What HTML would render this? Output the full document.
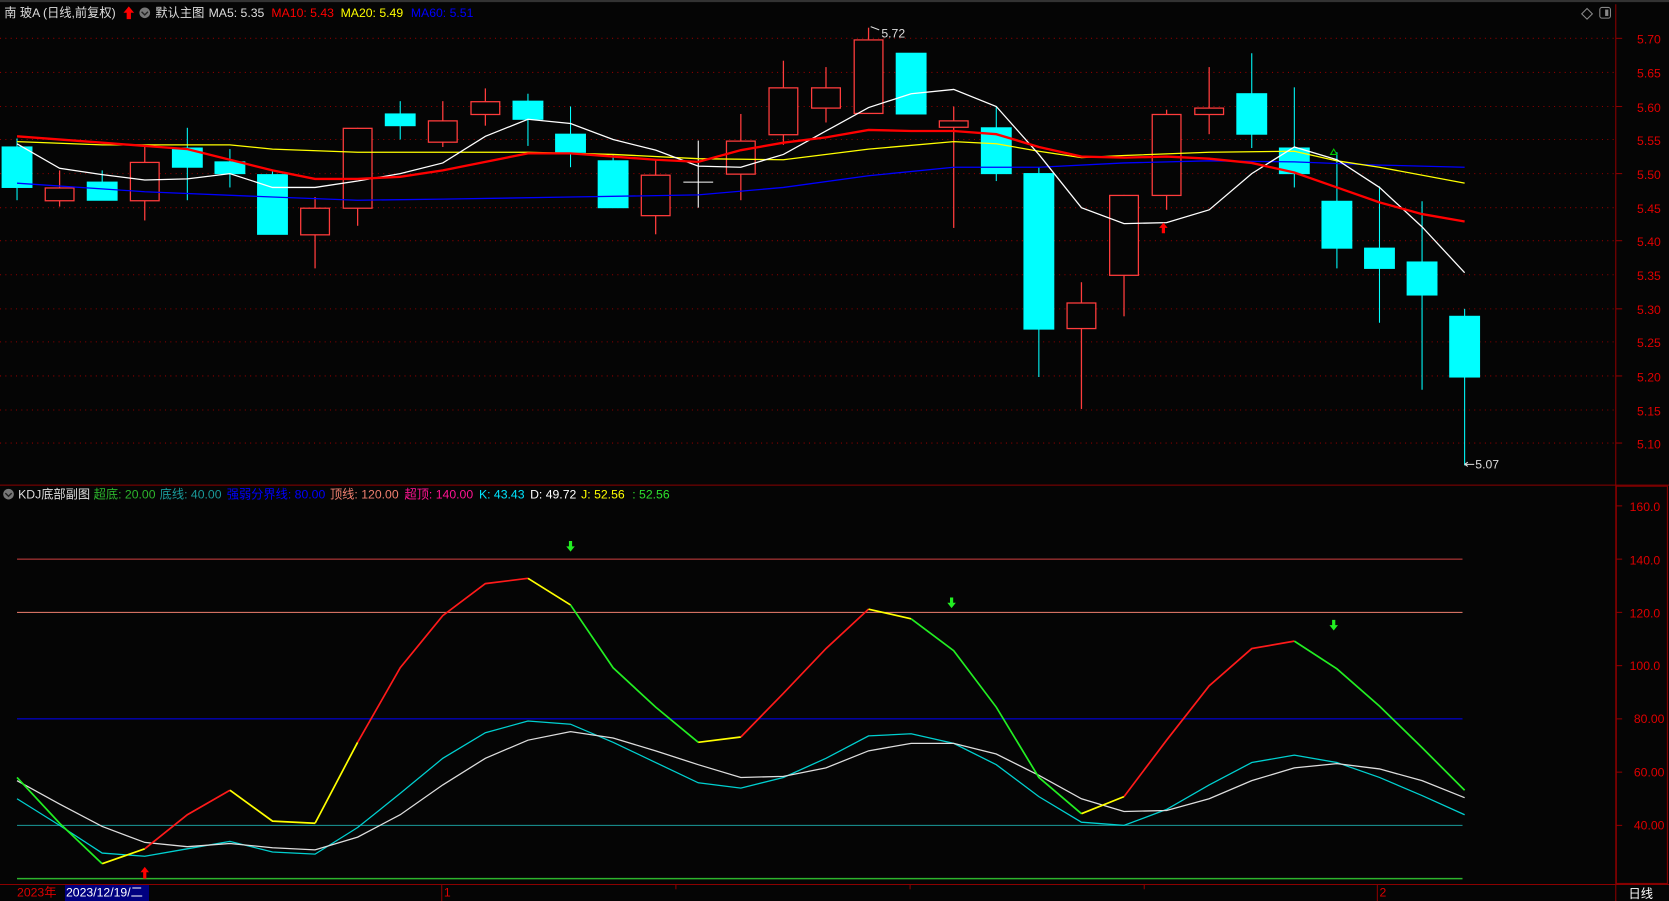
<!DOCTYPE html>
<html><head><meta charset="utf-8"><style>
html,body{margin:0;padding:0;background:#050505;overflow:hidden;width:1669px;height:901px}
svg{display:block}
text{font-family:"Liberation Sans","Noto Sans CJK SC",sans-serif;font-size:11.5px}
</style></head><body>
<svg width="1669" height="901" viewBox="0 0 1568 846" preserveAspectRatio="none">
<rect width="1568" height="846" fill="#050505"/>
<line x1="0" y1="1" x2="1568" y2="1" stroke="#333" stroke-width="2"/>
<!-- header -->
<text x="4" y="16" fill="#ddd">南 玻A (日线,前复权)</text>
<path d="M121 6 l5 6 h-3 v6 h-4 v-6 h-3z" fill="#f00"/>
<circle cx="136" cy="12" r="5" fill="#777"/><path d="M133 11 l3 3 l3 -3" stroke="#222" fill="none" stroke-width="1.3"/>
<text x="146" y="16" fill="#ddd">默认主图</text>
<text x="196" y="16" fill="#ddd">MA5: 5.35</text>
<text x="255" y="16" fill="#f00">MA10: 5.43</text>
<text x="320" y="16" fill="#ff0">MA20: 5.49</text>
<text x="386" y="16" fill="#0000ff">MA60: 5.51</text>
<path d="M1491 8 l5 5 l-5 5 l-5 -5z" fill="none" stroke="#888"/>
<rect x="1503" y="7" width="10" height="10" rx="2" fill="none" stroke="#888"/><rect x="1508" y="9" width="3" height="6" fill="#888"/>
<!-- price grid -->
<g stroke="#8b0000" stroke-dasharray="1,4" stroke-width="1">
<line x1="0" x2="1518" y1="36" y2="36"/><line x1="0" x2="1518" y1="68" y2="68"/><line x1="0" x2="1518" y1="100" y2="100"/><line x1="0" x2="1518" y1="131" y2="131"/><line x1="0" x2="1518" y1="163" y2="163"/><line x1="0" x2="1518" y1="195" y2="195"/><line x1="0" x2="1518" y1="226" y2="226"/><line x1="0" x2="1518" y1="258" y2="258"/><line x1="0" x2="1518" y1="290" y2="290"/><line x1="0" x2="1518" y1="321" y2="321"/><line x1="0" x2="1518" y1="353" y2="353"/><line x1="0" x2="1518" y1="385" y2="385"/><line x1="0" x2="1518" y1="416" y2="416"/>
</g>
<line x1="1518" y1="4" x2="1518" y2="846" stroke="#8b0000"/>
<g fill="#e00000" font-size="12">
<text x="1538" y="41">5.70</text><text x="1538" y="73">5.65</text><text x="1538" y="105">5.60</text><text x="1538" y="136">5.55</text><text x="1538" y="168">5.50</text><text x="1538" y="200">5.45</text><text x="1538" y="231">5.40</text><text x="1538" y="263">5.35</text><text x="1538" y="295">5.30</text><text x="1538" y="326">5.25</text><text x="1538" y="358">5.20</text><text x="1538" y="390">5.15</text><text x="1538" y="421">5.10</text>
</g>
<g stroke="#8b0000"><line x1="1518" x2="1524" y1="36" y2="36"/><line x1="1518" x2="1524" y1="100" y2="100"/><line x1="1518" x2="1524" y1="163" y2="163"/><line x1="1518" x2="1524" y1="226" y2="226"/><line x1="1518" x2="1524" y1="290" y2="290"/><line x1="1518" x2="1524" y1="353" y2="353"/><line x1="1518" x2="1524" y1="416" y2="416"/></g>
<!-- candles: cyan -->
<g stroke="#00ffff" fill="#00ffff">
<line x1="16" x2="16" y1="130" y2="188"/><rect x="2" y="138" width="28" height="38"/>
<line x1="96" x2="96" y1="160" y2="188"/><rect x="82" y="171" width="28" height="17"/>
<line x1="176" x2="176" y1="120" y2="188"/><rect x="162" y="139" width="28" height="18"/>
<line x1="216" x2="216" y1="140" y2="176"/><rect x="202" y="152" width="28" height="11"/>
<line x1="256" x2="256" y1="160" y2="220"/><rect x="242" y="164" width="28" height="56"/>
<line x1="376" x2="376" y1="95" y2="131"/><rect x="362" y="107" width="28" height="11"/>
<line x1="496" x2="496" y1="88" y2="137"/><rect x="482" y="95" width="28" height="17"/>
<line x1="536" x2="536" y1="100" y2="157"/><rect x="522" y="126" width="28" height="17"/>
<line x1="576" x2="576" y1="145" y2="195"/><rect x="562" y="151" width="28" height="44"/>
<rect x="842" y="50" width="28" height="57"/>
<line x1="936" x2="936" y1="100" y2="170"/><rect x="922" y="120" width="28" height="43"/>
<line x1="976" x2="976" y1="157" y2="354"/><rect x="962" y="163" width="28" height="146"/>
<line x1="1176" x2="1176" y1="50" y2="139"/><rect x="1162" y="88" width="28" height="38"/>
<line x1="1216" x2="1216" y1="82" y2="176"/><rect x="1202" y="139" width="28" height="24"/>
<line x1="1256" x2="1256" y1="143" y2="252"/><rect x="1242" y="189" width="28" height="44"/>
<line x1="1296" x2="1296" y1="175" y2="303"/><rect x="1282" y="233" width="28" height="19"/>
<line x1="1336" x2="1336" y1="189" y2="366"/><rect x="1322" y="246" width="28" height="31"/>
<line x1="1376" x2="1376" y1="290" y2="437"/><rect x="1362" y="297" width="28" height="57"/>
</g>
<!-- candles: red hollow -->
<g stroke="#ff3c3c" fill="#050505" stroke-width="1.2">
<line x1="56" x2="56" y1="160" y2="194"/><rect x="42.5" y="176.5" width="27" height="12"/>
<line x1="136" x2="136" y1="138" y2="207"/><rect x="122.5" y="152.5" width="27" height="36"/>
<line x1="296" x2="296" y1="185" y2="252"/><rect x="282.5" y="195.5" width="27" height="25"/>
<line x1="336" x2="336" y1="120" y2="212"/><rect x="322.5" y="120.5" width="27" height="75"/>
<line x1="416" x2="416" y1="95" y2="138"/><rect x="402.5" y="113.5" width="27" height="20"/>
<line x1="456" x2="456" y1="83" y2="118"/><rect x="442.5" y="95.5" width="27" height="12"/>
<line x1="616" x2="616" y1="150" y2="220"/><rect x="602.5" y="164.5" width="27" height="38"/>
<line x1="696" x2="696" y1="107" y2="188"/><rect x="682.5" y="132.5" width="27" height="31"/>
<line x1="736" x2="736" y1="57" y2="136"/><rect x="722.5" y="82.5" width="27" height="44"/>
<line x1="776" x2="776" y1="63" y2="115"/><rect x="762.5" y="82.5" width="27" height="19"/>
<line x1="816" x2="816" y1="26" y2="37"/><rect x="802.5" y="37.5" width="27" height="69"/>
<line x1="896" x2="896" y1="100" y2="214"/><rect x="882.5" y="113.5" width="27" height="6"/>
<line x1="1016" x2="1016" y1="265" y2="384"/><rect x="1002.5" y="284.5" width="27" height="24"/>
<line x1="1056" x2="1056" y1="183" y2="297"/><rect x="1042.5" y="183.5" width="27" height="75"/>
<line x1="1096" x2="1096" y1="103" y2="197"/><rect x="1082.5" y="107.5" width="27" height="76"/>
<line x1="1136" x2="1136" y1="63" y2="126"/><rect x="1122.5" y="101.5" width="27" height="6"/>
</g>
<g stroke="#fff"><line x1="656" x2="656" y1="132" y2="195"/><line x1="642" x2="670" y1="171" y2="171"/></g>
<!-- MAs -->
<polyline fill="none" stroke="#0000ff" stroke-width="1.2" points="16,172 136,180 256,185 336,188 416,187 536,185 656,183 736,176 816,165 896,157 976,157 1056,153 1136,151 1216,152 1296,155 1376,157"/>
<polyline fill="none" stroke="#ffff00" stroke-width="1.2" points="16,133 96,136 176,136 216,136 256,140 336,143 416,143 496,143 576,145 656,149 736,150 816,140 896,133 936,135 976,142 1016,148 1056,146 1136,143 1216,142 1256,151 1296,157 1376,172"/>
<polyline fill="none" stroke="#fff" stroke-width="1.2" points="16,135 56,158 96,164 136,169 176,168 216,163 256,176 296,176 336,170 376,163 416,153 456,128 496,112 536,116 576,131 616,141 656,156 696,157 736,145 776,123 816,101 856,88 896,84 936,100 976,145 1016,195 1056,210 1096,209 1136,197 1176,163 1216,138 1256,150 1296,176 1336,213 1376,256"/>
<polyline fill="none" stroke="#ff0000" stroke-width="2.2" points="16,128 96,134 176,140 216,150 256,160 296,168 336,168 376,166 416,160 456,152 496,144 536,144 576,147 616,150 656,152 696,141 736,134 776,129 816,122 856,123 896,123 936,126 976,138 1016,147 1056,148 1096,147 1136,149 1176,153 1216,162 1256,176 1296,190 1336,201 1376,208"/>
<text x="828" y="35" fill="#ddd">5.72</text><path d="M818 25 l8 3" stroke="#ddd"/>
<text x="1386" y="440" fill="#ddd">5.07</text><path d="M1376 436 h9 M1376 436 l3 -2 M1376 436 l3 2" stroke="#ddd"/>
<path d="M1093 209 l4 5 h-2.5 v5 h-3 v-5 h-2.5z" fill="#f00"/>
<path d="M1253 140 l-3 5 h6z" fill="none" stroke="#0c0"/>
<!-- separator -->
<line x1="0" y1="455.5" x2="1568" y2="455.5" stroke="#8b0000"/>
<rect x="1518.5" y="456.5" width="48" height="373" fill="none" stroke="#8b0000"/>
<!-- KDJ header -->
<circle cx="8" cy="464" r="5" fill="#777"/><path d="M5 463 l3 3 l3 -3" stroke="#222" fill="none" stroke-width="1.3"/>
<text x="17" y="468" fill="#ddd">KDJ底部副图</text>
<text x="88" y="468" fill="#2db52d">超底: 20.00</text>
<text x="150" y="468" fill="#1a9a9a">底线: 40.00</text>
<text x="213" y="468" fill="#0000ff">强弱分界线: 80.00</text>
<text x="310" y="468" fill="#f08070">顶线: 120.00</text>
<text x="380" y="468" fill="#ff1493">超顶: 140.00</text>
<text x="450" y="468" fill="#00e5ff">K: 43.43</text>
<text x="498" y="468" fill="#fff">D: 49.72</text>
<text x="546" y="468" fill="#ff0">J: 52.56</text>
<text x="594" y="468" fill="#2de02d">: 52.56</text>
<!-- KDJ axis -->
<g fill="#e00000" font-size="12">
<text x="1531" y="480">160.0</text><text x="1531" y="530">140.0</text><text x="1531" y="580">120.0</text><text x="1531" y="629">100.0</text><text x="1535" y="679">80.00</text><text x="1535" y="729">60.00</text><text x="1535" y="779">40.00</text>
</g>
<g stroke="#8b0000"><line x1="1518" x2="1524" y1="475" y2="475"/><line x1="1518" x2="1524" y1="525" y2="525"/><line x1="1518" x2="1524" y1="575" y2="575"/><line x1="1518" x2="1524" y1="625" y2="625"/><line x1="1518" x2="1524" y1="675" y2="675"/><line x1="1518" x2="1524" y1="725" y2="725"/><line x1="1518" x2="1524" y1="775" y2="775"/></g>
<line x1="16" x2="1374" y1="525" y2="525" stroke="#d04040"/>
<line x1="16" x2="1374" y1="575" y2="575" stroke="#f08070"/>
<line x1="16" x2="1374" y1="675" y2="675" stroke="#0000ff"/>
<line x1="16" x2="1374" y1="775" y2="775" stroke="#1a9a9a"/>
<line x1="16" x2="1374" y1="825" y2="825" stroke="#2db52d" stroke-width="1.5"/>
<polyline fill="none" stroke="#00d0d0" stroke-width="1.2" points="16,750 56,775 96,801 136,804 176,797 216,790 256,800 296,802 336,777 376,745 416,712 456,688 496,677 536,680 576,697 616,716 656,735 696,740 736,730 776,712 816,691 856,689 896,698 936,718 976,748 1016,772 1056,775 1096,760 1136,737 1176,716 1216,709 1256,716 1296,730 1336,747 1376,765"/>
<polyline fill="none" stroke="#ddd" stroke-width="1.2" points="16,733 56,755 96,776 136,791 176,795 216,792 256,796 296,798 336,786 376,765 416,737 456,712 496,695 536,687 576,693 616,705 656,718 696,730 736,729 776,721 816,705 856,698 896,698 936,708 976,728 1016,750 1056,762 1096,761 1136,750 1176,733 1216,721 1256,717 1296,722 1336,733 1376,749"/>
<g fill="none" stroke-width="1.6">
<polyline stroke="#22ee22" points="16,730 56,773 96,811"/>
<polyline stroke="#ffff00" points="96,811 136,797"/>
<polyline stroke="#ff1a1a" points="136,797 176,765 216,742"/>
<polyline stroke="#ffff00" points="216,742 256,771 296,773"/>
<polyline stroke="#ffff00" points="296,773 336,697"/>
<polyline stroke="#ff1a1a" points="336,697 376,627 416,578 456,548 496,543"/>
<polyline stroke="#ffff00" points="496,543 536,568"/>
<polyline stroke="#22ee22" points="536,568 576,627 616,664 656,697"/>
<polyline stroke="#ffff00" points="656,697 696,692"/>
<polyline stroke="#ff1a1a" points="696,692 736,651 776,609 816,572"/>
<polyline stroke="#ffff00" points="816,572 856,581"/>
<polyline stroke="#22ee22" points="856,581 896,611 936,664 976,730 1016,764"/>
<polyline stroke="#ffff00" points="1016,764 1056,748"/>
<polyline stroke="#ff1a1a" points="1056,748 1096,695 1136,644 1176,609 1216,602"/>
<polyline stroke="#22ee22" points="1216,602 1256,628 1296,663 1336,702 1376,742"/>
</g>
<g fill="#22ee22"><path d="M536 518 l-4 -5 h2.5 v-5 h3 v5 h2.5z"/><path d="M894 571 l-4 -5 h2.5 v-5 h3 v5 h2.5z"/><path d="M1253 592 l-4 -5 h2.5 v-5 h3 v5 h2.5z"/></g>
<path d="M136 814 l4 5 h-2.5 v6 h-3 v-6 h-2.5z" fill="#f00"/>
<!-- date axis -->
<line x1="0" y1="830.5" x2="1568" y2="830.5" stroke="#8b0000"/>
<g stroke="#8b0000"><line x1="415" x2="415" y1="831" y2="846"/><line x1="1294" x2="1294" y1="831" y2="846"/><line x1="635" x2="635" y1="831" y2="835"/><line x1="855" x2="855" y1="831" y2="835"/><line x1="1075" x2="1075" y1="831" y2="835"/></g>
<text x="16" y="842" fill="#e00000">2023年</text>
<rect x="61" y="831" width="79" height="15" fill="#000080"/>
<text x="62" y="842" fill="#fff">2023/12/19/二</text>
<text x="417" y="842" fill="#e00000">1</text>
<text x="1296" y="842" fill="#e00000">2</text>
<text x="1530" y="843" fill="#fff">日线</text>
</svg>
</body></html>
